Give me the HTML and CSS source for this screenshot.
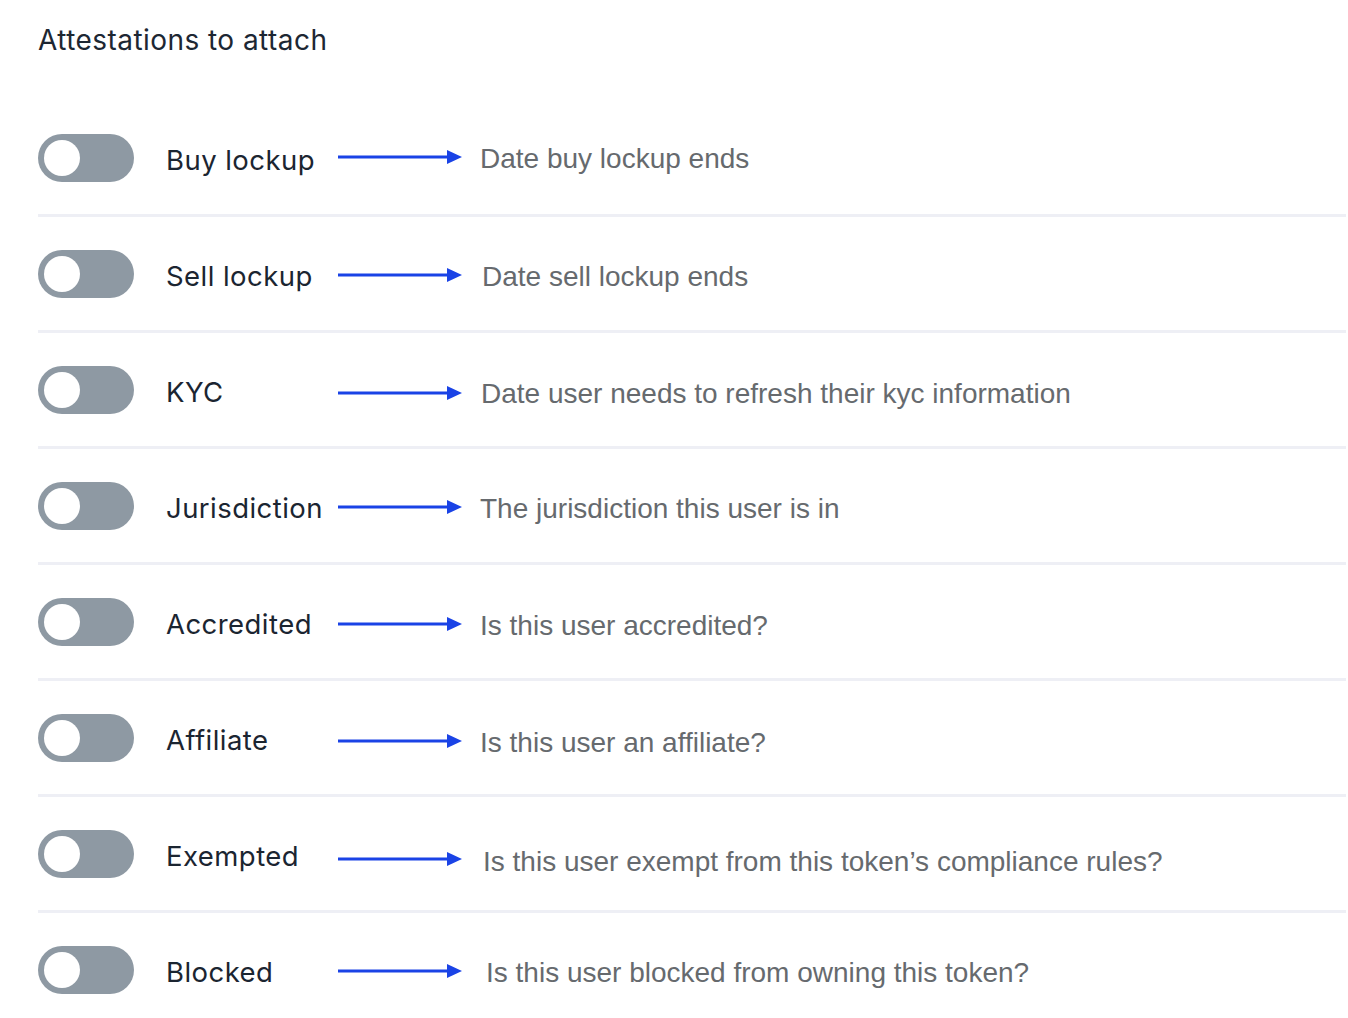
FILE: index.html
```html
<!DOCTYPE html>
<html>
<head>
<meta charset="utf-8">
<link rel="stylesheet" href="styles.css">
</head>
<body>
<div class="page">
  <h1 class="title">Attestations to attach</h1>
  <ul class="list">
    <li class="row"><span class="toggle"><span class="knob"></span></span><span class="label">Buy lockup</span><span class="link"><svg class="arrow" width="124" height="16" viewBox="0 0 124 16"><line x1="0" y1="8" x2="112" y2="8"/><polygon points="109,1 124,8 109,15"/></svg><span class="desc">Date buy lockup ends</span></span></li>
    <li class="row"><span class="toggle"><span class="knob"></span></span><span class="label">Sell lockup</span><span class="link"><svg class="arrow" width="124" height="16" viewBox="0 0 124 16"><line x1="0" y1="8" x2="112" y2="8"/><polygon points="109,1 124,8 109,15"/></svg><span class="desc">Date sell lockup ends</span></span></li>
    <li class="row"><span class="toggle"><span class="knob"></span></span><span class="label">KYC</span><span class="link"><svg class="arrow" width="124" height="16" viewBox="0 0 124 16"><line x1="0" y1="8" x2="112" y2="8"/><polygon points="109,1 124,8 109,15"/></svg><span class="desc">Date user needs to refresh their kyc information</span></span></li>
    <li class="row"><span class="toggle"><span class="knob"></span></span><span class="label">Jurisdiction</span><span class="link"><svg class="arrow" width="124" height="16" viewBox="0 0 124 16"><line x1="0" y1="8" x2="112" y2="8"/><polygon points="109,1 124,8 109,15"/></svg><span class="desc">The jurisdiction this user is in</span></span></li>
    <li class="row"><span class="toggle"><span class="knob"></span></span><span class="label">Accredited</span><span class="link"><svg class="arrow" width="124" height="16" viewBox="0 0 124 16"><line x1="0" y1="8" x2="112" y2="8"/><polygon points="109,1 124,8 109,15"/></svg><span class="desc">Is this user accredited?</span></span></li>
    <li class="row"><span class="toggle"><span class="knob"></span></span><span class="label">Affiliate</span><span class="link"><svg class="arrow" width="124" height="16" viewBox="0 0 124 16"><line x1="0" y1="8" x2="112" y2="8"/><polygon points="109,1 124,8 109,15"/></svg><span class="desc">Is this user an affiliate?</span></span></li>
    <li class="row"><span class="toggle"><span class="knob"></span></span><span class="label">Exempted</span><span class="link"><svg class="arrow" width="124" height="16" viewBox="0 0 124 16"><line x1="0" y1="8" x2="112" y2="8"/><polygon points="109,1 124,8 109,15"/></svg><span class="desc">Is this user exempt from this token’s compliance rules?</span></span></li>
    <li class="row"><span class="toggle"><span class="knob"></span></span><span class="label">Blocked</span><span class="link"><svg class="arrow" width="124" height="16" viewBox="0 0 124 16"><line x1="0" y1="8" x2="112" y2="8"/><polygon points="109,1 124,8 109,15"/></svg><span class="desc">Is this user blocked from owning this token?</span></span></li>
  </ul>
</div>
</body>
</html>
```
FILE: styles.css
```css
html, body {
  margin: 0;
  padding: 0;
  background: #ffffff;
}
.page {
  padding: 24px 2px 0 38px;
}
.title {
  margin: 0 0 45px 0;
  font-family: Inter, "Noto Sans", sans-serif;
  font-weight: 400;
  font-size: 28px;
  line-height: 32px;
  color: #1d2733;
  letter-spacing: 0.45px;
}
.list {
  list-style: none;
  margin: 0;
  padding: 0;
}
.row {
  display: flex;
  align-items: center;
  padding: 33px 0 32px;
  border-bottom: 3px solid #eeeff5;
}
.toggle {
  flex: none;
  width: 96px;
  height: 48px;
  border-radius: 24px;
  background: #8e99a3;
  display: flex;
  align-items: center;
  padding-left: 6px;
  box-sizing: border-box;
}
.knob {
  width: 36px;
  height: 36px;
  border-radius: 50%;
  background: #ffffff;
}
.label {
  flex: none;
  width: 172px;
  margin-left: 32px;
  font-family: Inter, "Noto Sans", sans-serif;
  font-size: 27.5px;
  color: #1b2531;
  padding-top: 3px;
  letter-spacing: 0.45px;
}
.link {
  display: flex;
  align-items: center;
  height: 48px;
  box-sizing: border-box;
}
.row:nth-child(1) .link { padding-bottom: 2px; }
.row:nth-child(2) .link { padding-top: 2px; }
.row:nth-child(3) .link { padding-top: 6px; }
.row:nth-child(4) .link { padding-top: 2px; }
.row:nth-child(5) .link { padding-top: 4px; }
.row:nth-child(6) .link { padding-top: 6px; }
.row:nth-child(7) .link { padding-top: 10px; }
.row:nth-child(8) .link { padding-top: 2px; }
.arrow {
  flex: none;
  display: block;
}
.arrow line {
  stroke: #1a43e6;
  stroke-width: 3;
}
.arrow polygon {
  fill: #1a43e6;
}
.desc {
  margin-left: 18px;
  padding-top: 3px;
  font-family: "Liberation Sans", Arial, sans-serif;
  font-size: 28px;
  color: #666a6e;
}
.row:nth-child(2) .desc { margin-left: 20px; }
.row:nth-child(3) .desc { margin-left: 19px; padding-top: 2px; }
.row:nth-child(7) .desc { margin-left: 21px; padding-top: 6px; }
.row:nth-child(8) .desc { margin-left: 24px; padding-top: 4px; }
```
